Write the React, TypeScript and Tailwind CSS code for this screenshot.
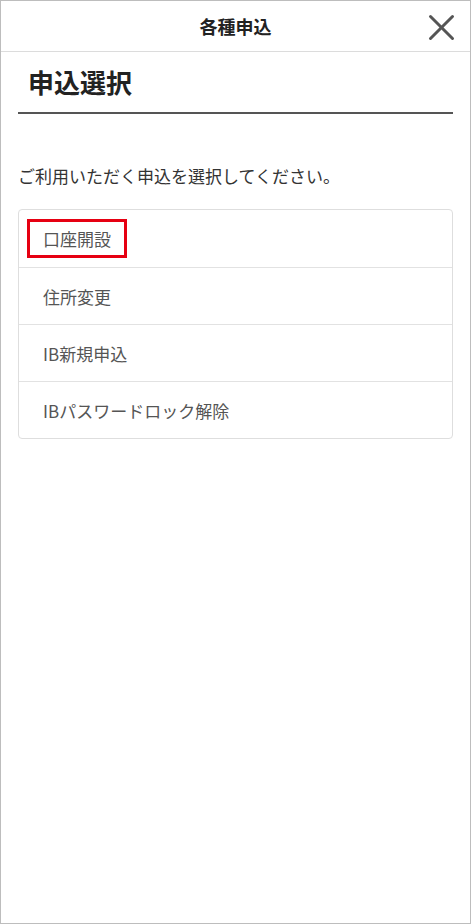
const items = ['口座開設', '住所変更', 'IB新規申込', 'IBパスワードロック解除'];

export default function App() {
  return (
    <div
      className="h-[924px] w-[471px] border border-[#bdbdbd] bg-white text-[#333]"
      style={{ fontFamily: '"Noto Sans CJK JP", "Noto Sans", sans-serif' }}
    >
      {/* header */}
      <div className="relative flex h-[51px] items-center justify-center border-b border-[#dcdcdc]">
        <span className="text-[18px] font-bold text-[#222]">各種申込</span>
        <button type="button" className="absolute left-[427px] top-[13px] text-[#555]">
          <svg width="27" height="27" viewBox="0 0 27 27" fill="none" stroke="currentColor" strokeWidth="3" strokeLinecap="round">
            <line x1="2.5" y1="2.5" x2="24.5" y2="24.5" />
            <line x1="24.5" y1="2.5" x2="2.5" y2="24.5" />
          </svg>
        </button>
      </div>

      <div className="px-[17px]">
        <h1 className="border-b-2 border-[#555] pb-[12px] pl-[10px] pt-[12px] text-[26px] font-bold leading-[36px] text-[#222]">
          申込選択
        </h1>

        <p className="mt-[50px] text-[17px] leading-[24px] text-[#333]">ご利用いただく申込を選択してください。</p>

        <div className="mt-[21px] rounded-[4px] border border-[#dedede]">
          {items.map((item, i) => (
            <div
              key={item}
              className={`flex h-[57px] items-center pl-[8px] ${i > 0 ? 'border-t border-[#e2e2e2]' : ''}`}
            >
              <span
                className={`px-[16px] py-[7px] text-[17px] leading-[25px] text-[#555] ${
                  i === 0 ? 'outline-[3px] outline-solid outline-[#e60012] -outline-offset-[3px]' : ''
                }`}
              >
                {item}
              </span>
            </div>
          ))}
        </div>
      </div>
    </div>
  );
}
